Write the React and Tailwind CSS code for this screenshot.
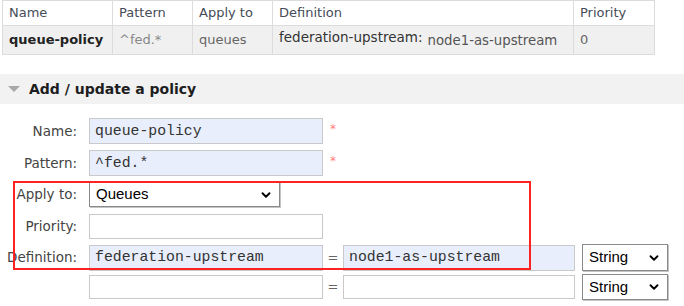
import React from 'react';
import { ChevronDown } from 'lucide-react';

const cell = 'border border-[#dcdcdc] px-[6px] text-left';

function Field({ value, w = 'w-[234px]', h = 'h-[26px]', blue }) {
  return (
    <div
      className={`${w} ${h} border border-[#c9c9c9] flex items-center pl-[5px] text-[14.8px] text-[#333] ${
        blue ? 'bg-[#e8eefb]' : 'bg-white'
      }`}
      style={{ fontFamily: '"Liberation Mono", monospace' }}
    >
      {value}
    </div>
  );
}

function Select({ value, w, h = 'h-[25px]' }) {
  return (
    <div
      className={`${w} ${h} border border-[#8a8a8a] shadow-[1px_1px_0_#c4c4c4] bg-white flex items-center justify-between pl-[6px] pr-[6px] text-[15px] text-black`}
      style={{ fontFamily: '"Liberation Sans", Arial, sans-serif' }}
    >
      <span>{value}</span>
      <ChevronDown className="w-[14px] h-[14px]" strokeWidth={3.2} />
    </div>
  );
}

function Row({ label, className = '', children }) {
  return (
    <div className={`flex items-center ${className}`}>
      <div className="w-[77px] text-right text-[13.5px] text-[#444] shrink-0 whitespace-nowrap">{label}</div>
      <div className="ml-[12px] flex items-center">{children}</div>
    </div>
  );
}

const Star = () => <span className="ml-[7px] self-start mt-[2px] text-[#ff8080] text-[12px]">*</span>;

export default function App() {
  return (
    <div
      className="w-[684px] h-[306px] bg-white overflow-hidden relative"
      style={{ fontFamily: '"DejaVu Sans", Verdana, sans-serif' }}
    >
      <table className="border-collapse ml-[2px] text-[13px]">
        <thead>
          <tr className="h-[25px] text-[#454c57]">
            <th className={`${cell} font-normal w-[110px]`}>Name</th>
            <th className={`${cell} font-normal w-[80px]`}>Pattern</th>
            <th className={`${cell} font-normal w-[80px]`}>Apply to</th>
            <th className={`${cell} font-normal w-[301px]`}>Definition</th>
            <th className={`${cell} font-normal w-[81px]`}>Priority</th>
          </tr>
        </thead>
        <tbody>
          <tr className="h-[29px] bg-[#f0f0f0]">
            <td className={`${cell} font-bold text-[#222]`}>queue-policy</td>
            <td className={`${cell} text-[#888]`}>^fed.*</td>
            <td className={`${cell} text-[#666]`}>queues</td>
            <td className={`${cell} whitespace-nowrap`}>
              <span className="relative -top-[3px] text-[#333] text-[13.5px]">federation-upstream:</span>
              <span className="ml-[5px] text-[#555] text-[13.3px]">node1-as-upstream</span>
            </td>
            <td className={`${cell} text-[#666]`}>0</td>
          </tr>
        </tbody>
      </table>

      <div className="mt-[19px] h-[30px] bg-[#f2f2f2] flex items-center">
        <svg width="12" height="7" viewBox="0 0 12 7" className="ml-[8px] mt-[1px]">
          <polygon points="0,0 12,0 6,6" fill="#a8a8a8" />
        </svg>
        <span className="ml-[9px] font-bold text-[14px] text-[#1e1e1e]">Add / update a policy</span>
      </div>

      <div className="mt-[14px]">
        <Row label="Name:">
          <Field value="queue-policy" blue />
          <Star />
        </Row>
        <Row label="Pattern:" className="mt-[6px]">
          <Field value="^fed.*" blue />
          <Star />
        </Row>
        <Row label="Apply to:" className="mt-[6px]">
          <Select value="Queues" w="w-[191px]" />
        </Row>
        <Row label="Priority:" className="mt-[7px]">
          <Field value="" h="h-[25px]" />
        </Row>
        <Row label="Definition:" className="mt-[5px]">
          <Field value="federation-upstream" blue />
          <span className="w-[20px] text-center text-[13px] text-[#666]">=</span>
          <Field value="node1-as-upstream" w="w-[232px]" blue />
          <div className="ml-[7px]">
            <Select value="String" w="w-[86px]" h="h-[27px]" />
          </div>
        </Row>
        <Row label="" className="mt-[3px]">
          <Field value="" h="h-[24px]" />
          <span className="w-[20px] text-center text-[13px] text-[#666]">=</span>
          <Field value="" w="w-[232px]" h="h-[24px]" />
          <div className="ml-[7px]">
            <Select value="String" w="w-[86px]" h="h-[26px]" />
          </div>
        </Row>
      </div>

      <div className="absolute left-[13px] top-[181px] w-[518px] h-[89px] border-2 border-[#f22] pointer-events-none" />
    </div>
  );
}
